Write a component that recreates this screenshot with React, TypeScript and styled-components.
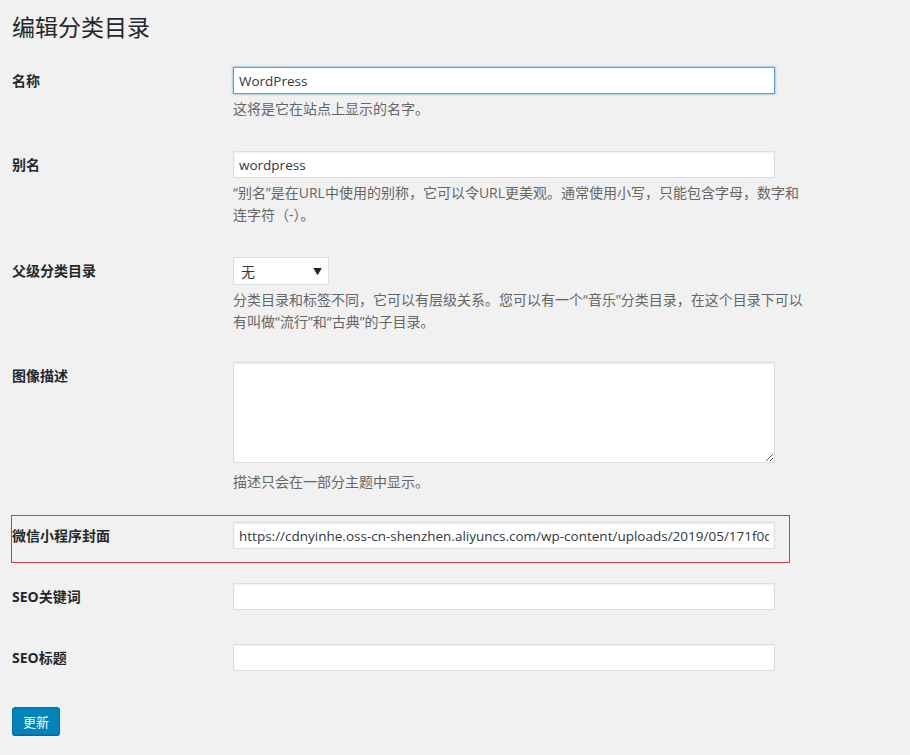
import React from "react";
import styled, { createGlobalStyle } from "styled-components";

const Global = createGlobalStyle`
  html, body { margin: 0; background: #f1f1f1; }
  body { font-family: "Open Sans", "Noto Sans CJK SC", sans-serif; color: #23282d; font-size: 13px; }
`;

const Page = styled.div`
  padding: 13px 12px 20px;
`;
const Title = styled.h1`
  margin: 0;
  font-size: 23px;
  line-height: 29px;
  font-weight: 400;
  color: #23282d;
`;
const Row = styled.div<{ $gap: number; $hl?: boolean }>`
  display: grid;
  grid-template-columns: 221px 542px;
  margin-top: ${(p) => p.$gap}px;
  ${(p) =>
    p.$hl
      ? `border: 1px solid #d9393f; margin-left: -1px; width: 763px; padding: 6px 14px 12px 0;`
      : ``}
`;
const Label = styled.div`
  font-weight: 700;
  font-size: 14px;
  line-height: 28px;
  color: #23282d;
`;
const Field = styled.div`
  display: flex;
  flex-direction: column;
  align-items: flex-start;
`;
const Input = styled.input<{ $focus?: boolean }>`
  box-sizing: border-box;
  width: 542px;
  height: 27px;
  margin: 0;
  padding: 0 5px;
  font: 13.5px "Open Sans", "Noto Sans CJK SC", sans-serif;
  color: #32373c;
  background: #fff;
  border: 1px solid ${(p) => (p.$focus ? "#5b9dd9" : "#ddd")};
  box-shadow: ${(p) => (p.$focus ? "0 0 2px rgba(30,140,190,0.8)" : "inset 0 1px 2px rgba(0,0,0,0.07)")};
  outline: none;
`;
const TextArea = styled.textarea`
  box-sizing: border-box;
  width: 542px;
  height: 101px;
  margin: 0;
  background: #fff;
  border: 1px solid #ddd;
  box-shadow: inset 0 1px 2px rgba(0,0,0,0.07);
`;
const Select = styled.div`
  box-sizing: border-box;
  width: 96px;
  height: 28px;
  display: flex;
  align-items: center;
  justify-content: space-between;
  padding: 0 6px 0 7px;
  background: #fff;
  border: 1px solid #ddd;
  font-size: 14px;
  color: #32373c;
`;
const Arrow = styled.span`
  font-size: 9px;
  color: #222;
`;
const Desc = styled.p<{ $mt?: number }>`
  margin: ${(p) => p.$mt ?? 4}px 0 0;
  font-size: 14px;
  line-height: 22px;
  color: #666;
  width: 570px;
`;
const Button = styled.button`
  margin-top: 35px;
  width: 48px;
  height: 28px;
  padding: 0;
  background: #0085ba;
  border: 1px solid #0073aa;
  border-radius: 3px;
  box-shadow: 0 1px 0 #006799;
  color: #fff;
  font: 13px "Noto Sans CJK SC", sans-serif;
`;

export default function App() {
  return (
    <Page>
      <Global />
      <Title>编辑分类目录</Title>
      <Row $gap={25}>
        <Label>名称</Label>
        <Field>
          <Input $focus defaultValue="WordPress" />
          <Desc>这将是它在站点上显示的名字。</Desc>
        </Field>
      </Row>
      <Row $gap={31}>
        <Label>别名</Label>
        <Field>
          <Input defaultValue="wordpress" />
          <Desc>“别名”是在URL中使用的别称，它可以令URL更美观。通常使用小写，只能包含字母，数字和连字符（-）。</Desc>
        </Field>
      </Row>
      <Row $gap={31}>
        <Label>父级分类目录</Label>
        <Field>
          <Select>无<Arrow>▼</Arrow></Select>
          <Desc>分类目录和标签不同，它可以有层级关系。您可以有一个“音乐”分类目录，在这个目录下可以有叫做“流行”和“古典”的子目录。</Desc>
        </Field>
      </Row>
      <Row $gap={29}>
        <Label>图像描述</Label>
        <Field>
          <TextArea />
          <Desc $mt={8}>描述只会在一部分主题中显示。</Desc>
        </Field>
      </Row>
      <Row $gap={22} $hl>
        <Label>微信小程序封面</Label>
        <Field>
          <Input defaultValue="https://cdnyinhe.oss-cn-shenzhen.aliyuncs.com/wp-content/uploads/2019/05/171f0dc0c.jpg" />
        </Field>
      </Row>
      <Row $gap={20}>
        <Label>SEO关键词</Label>
        <Field><Input /></Field>
      </Row>
      <Row $gap={33}>
        <Label>SEO标题</Label>
        <Field><Input /></Field>
      </Row>
      <Button>更新</Button>
    </Page>
  );
}
